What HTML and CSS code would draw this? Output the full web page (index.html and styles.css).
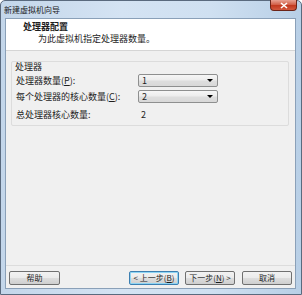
FILE: index.html
```html
<!DOCTYPE html>
<html lang="zh-CN">
<head>
<meta charset="utf-8">
<link rel="stylesheet" href="styles.css">
</head>
<body>
<div class="window">
  <div class="titlebar">
    <span class="title">新建虚拟机向导</span>
    <span class="close"><svg width="8" height="7" viewBox="0 0 8 7"><path d="M1 1L7 6M7 1L1 6" stroke="#fff" stroke-width="1.6"/></svg></span>
  </div>
  <div class="client">
    <div class="header">
      <div class="h-title">处理器配置</div>
      <div class="h-sub">为此虚拟机指定处理器数量。</div>
    </div>
    <div class="body">
      <div class="group">
        <div class="legend">处理器</div>
        <div class="row">
          <span class="label">处理器数量(<u>P</u>):</span>
          <span class="combo"><span>1</span><i class="arrow"></i></span>
        </div>
        <div class="row">
          <span class="label">每个处理器的核心数量(<u>C</u>):</span>
          <span class="combo"><span>2</span><i class="arrow"></i></span>
        </div>
        <div class="row last">
          <span class="label">总处理器核心数量:</span>
          <span class="value">2</span>
        </div>
      </div>
    </div>
    <div class="footer">
      <button class="btn help">帮助</button>
      <div class="spacer"></div>
      <button class="btn default">&lt; 上一步(<u>B</u>)</button>
      <button class="btn">下一步(<u>N</u>) &gt;</button>
      <button class="btn cancel">取消</button>
    </div>
  </div>
</div>
</body>
</html>
```

FILE: styles.css
```css
html, body {
  margin: 0;
  padding: 0;
  background: #fff;
}
body {
  font-family: "Noto Sans CJK SC", "Noto Sans", sans-serif;
  font-size: 9px;
  color: #1e1e1e;
}
.window {
  width: 302px;
  height: 295px;
  box-sizing: border-box;
  border: 1px solid #5a6a7e;
  border-radius: 5px 5px 0 0;
  background: linear-gradient(90deg, #c3d6ea 0%, #d4e3f3 40%, #cfe0f1 70%, #b8cfe6 100%);
  display: flex;
  flex-direction: column;
  padding: 0 5px 5px 4px;
}
.titlebar {
  height: 17px;
  display: flex;
  align-items: center;
  position: relative;
}
.title {
  font-size: 8px;
  color: #1a1a1a;
  margin-left: -1px;
  margin-top: -1px;
}
.close {
  position: absolute;
  right: -1px;
  top: -1px;
  width: 27px;
  height: 11px;
  border: 1px solid #6b2418;
  border-top: none;
  border-radius: 0 0 4px 4px;
  background: linear-gradient(#e8a293 0%, #d3624b 45%, #c23a20 55%, #d3583e 100%);
  display: flex;
  align-items: center;
  justify-content: center;
  box-sizing: border-box;
}
.client {
  flex: 1;
  background: #f0f0f0;
  border: 1px solid #8aa0b8;
  display: flex;
  flex-direction: column;
}
.header {
  height: 32px;
  background: #fff;
  border-bottom: 1px solid #d5d5d5;
  box-sizing: border-box;
  padding: 2px 0 0 17px;
}
.h-title {
  font-weight: bold;
  font-size: 9px;
  line-height: 12px;
}
.h-sub {
  margin-left: 15px;
  line-height: 11px;
}
.body {
  flex: 1;
  padding: 10px 6px 0 5px;
}
.group {
  border: 1px solid #dcdcdc;
  border-radius: 2px;
  height: 65px;
  box-sizing: border-box;
  position: relative;
  padding: 10px 0 0 4px;
}
.legend {
  position: absolute;
  top: -1px;
  left: 2px;
  padding: 0 1px;
  line-height: 12px;
}
.row {
  display: flex;
  align-items: center;
  height: 16px;
}
.row.last {
  height: 18px;
  padding-top: 1px;
}
.label {
  width: 122px;
}
.combo {
  width: 80px;
  height: 13px;
  box-sizing: border-box;
  border: 1px solid #8e8f8f;
  border-radius: 2px;
  background: linear-gradient(#f6f6f6 0%, #ececec 48%, #dedede 52%, #d8d8d8 100%);
  display: flex;
  align-items: center;
  justify-content: space-between;
  padding: 0 4px 0 3px;
  line-height: 11px;
}
.arrow {
  width: 0;
  height: 0;
  border-left: 3px solid transparent;
  border-right: 3px solid transparent;
  border-top: 3px solid #000;
}
.value {
  padding-left: 3px;
}
.footer {
  height: 23px;
  box-sizing: border-box;
  border-top: 1px solid #dcdcdc;
  display: flex;
  align-items: flex-start;
  padding: 5px 3px 0 3px;
  gap: 6px;
}
.spacer {
  flex: 1;
}
.btn {
  width: 50px;
  height: 14px;
  box-sizing: border-box;
  border: 1px solid #707070;
  border-radius: 2px;
  background: linear-gradient(#f2f2f2 0%, #ebebeb 48%, #dddddd 52%, #cfcfcf 100%);
  font-family: inherit;
  font-size: 8px;
  color: #1e1e1e;
  padding: 0;
  line-height: 12px;
  margin: 0;
}
.btn.help {
  width: 51px;
}
.btn.default {
  border-color: #3c7fb1;
  box-shadow: inset 0 0 0 1px #8fd5f4;
}
.cancel {
  margin-left: 1px;
}
```
